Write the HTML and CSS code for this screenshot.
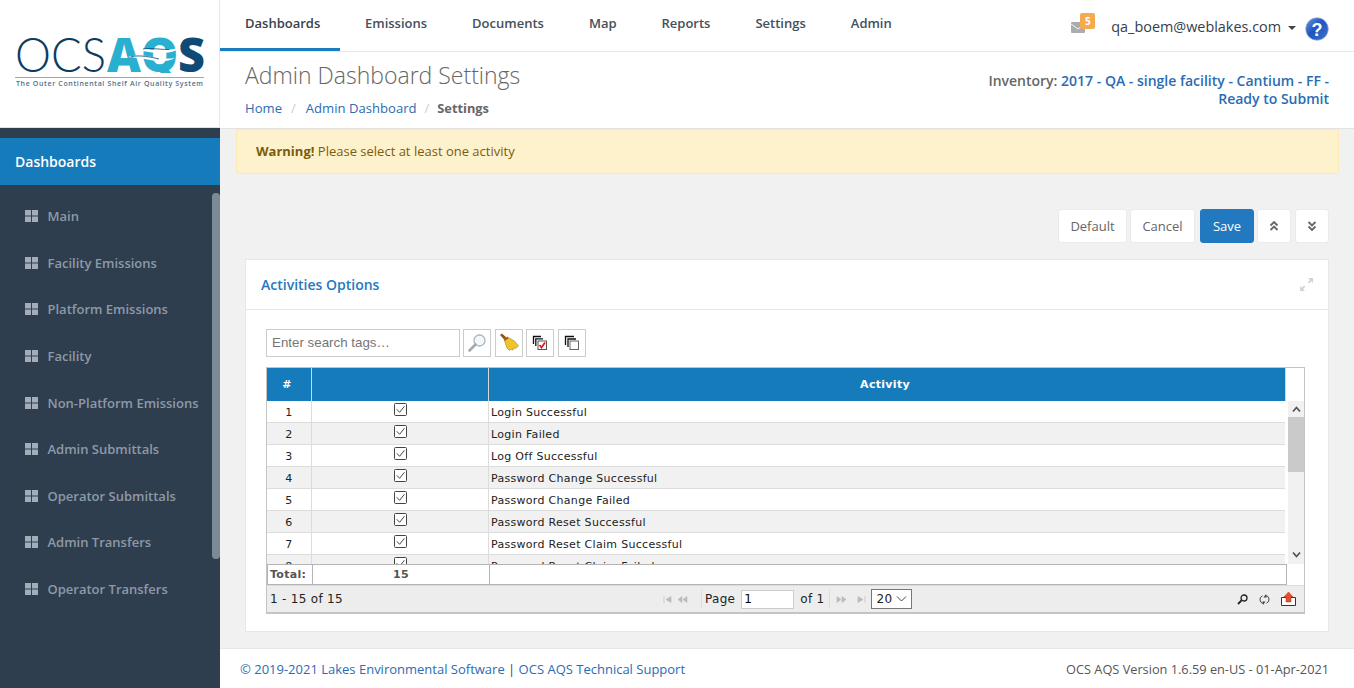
FILE: index.html

```html
<!DOCTYPE html>
<html lang="en">
<head>
  <meta charset="UTF-8">
  <title>Admin Dashboard Settings</title>
  <link rel="stylesheet" href="styles.css">
</head>
<body>
  <svg class="defs" width="0" height="0">
    <symbol id="i-grid" viewBox="0 0 13 12"><path d="M0 0h6v5.500H0zM7 0h6v5.500H7zM0 6.500h6V12H0zM7 6.500h6V12H7z" fill="currentColor"/></symbol>
    <symbol id="i-check" viewBox="0 0 13 13"><rect x=".5" y=".5" width="12" height="12" rx="1" fill="#fff" stroke="#444"/><path d="M2.800 6.300l2.800 3 4.800-6" fill="none" stroke="#444" stroke-width="1"/></symbol>
  </svg>

  <aside class="sidebar">
    <div class="logo">
      <svg width="192" height="64" viewBox="0 0 192 64">
        <defs><clipPath id="logoclip"><rect x="85" y="0" width="107" height="45"/></clipPath></defs>
        <text x="0" y="44" class="logo-ocs" textLength="91" lengthAdjust="spacingAndGlyphs">OCS</text>
        <g clip-path="url(#logoclip)">
          <text x="92" y="44" class="logo-aqs" textLength="98" lengthAdjust="spacingAndGlyphs">AQ<tspan class="logo-s">S</tspan></text>
        </g>
        <path d="M124 22c8-2.500 14 1 22 .5 6-.3 14-1.500 20-3-5 4-14 6-22 5.500-7-.4-13-1-20-3z" fill="#fff"/>
        <path d="M128 21c7-1.500 14 .5 26 .5" fill="none" stroke="#0f4a7c" stroke-width=".8"/>
        <path d="M113 29c9-3 18-2 27 .5 5 1.300 14 1.300 20 .5-6 3.500-15 4-22 2.500-7-1.500-18-3-25-3.500z" fill="#fff"/>
        <path d="M116 28.800c9-2.200 20 .3 28 2.200" fill="none" stroke="#0f4a7c" stroke-width=".8"/>
        <rect x="0" y="49" width="189" height=".8" fill="#7d95a8"/>
        <text x="1" y="58" class="logo-tag" textLength="187">The Outer Continental Shelf Air Quality System</text>
      </svg>
    </div>
    <div class="side-gap"></div>
    <div class="side-title">Dashboards</div>
    <nav class="side-menu">
      <a class="side-item"><svg width="13" height="12"><use href="#i-grid"/></svg>Main</a>
      <a class="side-item"><svg width="13" height="12"><use href="#i-grid"/></svg>Facility Emissions</a>
      <a class="side-item"><svg width="13" height="12"><use href="#i-grid"/></svg>Platform Emissions</a>
      <a class="side-item"><svg width="13" height="12"><use href="#i-grid"/></svg>Facility</a>
      <a class="side-item"><svg width="13" height="12"><use href="#i-grid"/></svg>Non-Platform Emissions</a>
      <a class="side-item"><svg width="13" height="12"><use href="#i-grid"/></svg>Admin Submittals</a>
      <a class="side-item"><svg width="13" height="12"><use href="#i-grid"/></svg>Operator Submittals</a>
      <a class="side-item"><svg width="13" height="12"><use href="#i-grid"/></svg>Admin Transfers</a>
      <a class="side-item"><svg width="13" height="12"><use href="#i-grid"/></svg>Operator Transfers</a>
      <div class="side-thumb"></div>
    </nav>
  </aside>

  <div class="main">
    <header class="topbar">
      <nav class="tabs">
        <a class="tab active">Dashboards</a>
        <a class="tab">Emissions</a>
        <a class="tab">Documents</a>
        <a class="tab">Map</a>
        <a class="tab">Reports</a>
        <a class="tab">Settings</a>
        <a class="tab">Admin</a>
      </nav>
      <div class="user-area">
        <span class="mail">
          <svg width="14" height="11" viewBox="0 0 14 11"><rect width="14" height="11" rx="1" fill="#a9adb1"/><path d="M0 2l7 5 7-5" fill="none" stroke="#f4f4f4" stroke-width="1"/></svg>
          <span class="mail-badge">5</span>
        </span>
        <span class="user-name">qa_boem@weblakes.com</span>
        <span class="caret"></span>
        <svg class="help" width="24" height="24" viewBox="0 0 24 24">
          <defs><linearGradient id="helpfill" x1="0" y1="0" x2="1" y2="1"><stop offset="0" stop-color="#6f95e0"/><stop offset=".45" stop-color="#1f55c0"/><stop offset="1" stop-color="#3f73cf"/></linearGradient></defs>
          <circle cx="12" cy="12" r="11.300" fill="url(#helpfill)" stroke="#9db4d8" stroke-width=".7"/>
          <text x="12" y="18.500" class="help-mark">?</text>
        </svg>
      </div>
    </header>

    <div class="page-head">
      <div>
        <h1>Admin Dashboard Settings</h1>
        <ul class="crumbs">
          <li><a>Home</a></li>
          <li class="sep">/</li>
          <li><a>Admin Dashboard</a></li>
          <li class="sep">/</li>
          <li class="current">Settings</li>
        </ul>
      </div>
      <div class="inventory">Inventory: <a>2017 - QA - single facility - Cantium - FF - Ready to Submit</a></div>
    </div>

    <div class="content">
      <div class="alert"><b>Warning!</b> Please select at least one activity</div>

      <div class="actions">
        <button class="btn btn-default">Default</button>
        <button class="btn btn-cancel">Cancel</button>
        <button class="btn primary">Save</button>
        <button class="btn icon-btn"><svg width="10" height="12" viewBox="0 0 10 12"><path d="M1.500 5.500L5 2l3.500 3.500M1.500 10L5 6.500 8.500 10" fill="none" stroke="#666" stroke-width="1.800"/></svg></button>
        <button class="btn icon-btn"><svg width="10" height="12" viewBox="0 0 10 12"><path d="M1.500 2L5 5.500 8.500 2M1.500 6.500L5 10l3.500-3.500" fill="none" stroke="#666" stroke-width="1.800"/></svg></button>
      </div>

      <section class="panel">
        <div class="panel-head">
          <span class="panel-title">Activities Options</span>
          <svg width="13" height="13" viewBox="0 0 13 13"><path d="M8 0h5v5l-1.700-1.700-2.300 2.300-1.300-1.300 2.300-2.300zM5 13H0V8l1.700 1.700L4 7.400l1.300 1.300-2.300 2.300z" fill="#d3d3d3"/></svg>
        </div>
        <div class="panel-body">
          <div class="search-row">
            <input class="tag-input" type="text" placeholder="Enter search tags…">
            <button class="tool">
              <svg width="20" height="20" viewBox="0 0 20 20"><circle cx="12.500" cy="7.500" r="5.500" fill="#f4f8fb" stroke="#a9b4bc" stroke-width="1.300"/><path d="M8.500 11.500L2.500 17.500" stroke="#a8a8a8" stroke-width="2.600" stroke-linecap="round"/></svg>
            </button>
            <button class="tool">
              <svg width="20" height="20" viewBox="0 0 20 20"><path d="M1 2l2-1.500 5 4.500-2.500 2z" fill="#8a5a1c"/><path d="M5 6.500l3.500-2.500 7 4 4 5-3 2.500-2-.5-.5 2-2.500-.5-1 1-2.500-2.500z" fill="#eec42a" stroke="#a98a12" stroke-width=".6"/><path d="M5 6.500l3.500-2.500 1 1.200L6 7.800z" fill="#c23b22"/></svg>
            </button>
            <button class="tool tool-tight">
              <svg width="16" height="16" viewBox="0 0 16 16"><path d="M1.500 9V1.500H9" fill="none" stroke="#111" stroke-width="1.300"/><path d="M3.800 11V3.800H11" fill="none" stroke="#111" stroke-width="1.300"/><rect x="6" y="6" width="8.500" height="8.500" fill="#fff" stroke="#555"/><path d="M7.500 10l2 2.500 3.500-5" fill="none" stroke="#e01820" stroke-width="1.700"/></svg>
            </button>
            <button class="tool">
              <svg width="16" height="16" viewBox="0 0 16 16"><path d="M1.500 10V1.500H10" fill="none" stroke="#111" stroke-width="1.300"/><path d="M4 12V4h8" fill="none" stroke="#111" stroke-width="1.300"/><rect x="6" y="6" width="8.500" height="8.500" fill="#fff" stroke="#666"/></svg>
            </button>
          </div>

          <div class="grid">
            <div class="grid-top">
              <div class="grid-head">
                <div class="cell">#</div>
                <div class="cell"></div>
                <div class="cell">Activity</div>
              </div>
              <div class="grid-corner"></div>
            </div>
            <div class="grid-mid">
              <div class="grid-rows">
                <div class="row"><div class="cell num">1</div><div class="cell chk"><svg width="13" height="13"><use href="#i-check"/></svg></div><div class="cell txt">Login Successful</div></div>
                <div class="row alt"><div class="cell num">2</div><div class="cell chk"><svg width="13" height="13"><use href="#i-check"/></svg></div><div class="cell txt">Login Failed</div></div>
                <div class="row"><div class="cell num">3</div><div class="cell chk"><svg width="13" height="13"><use href="#i-check"/></svg></div><div class="cell txt">Log Off Successful</div></div>
                <div class="row alt"><div class="cell num">4</div><div class="cell chk"><svg width="13" height="13"><use href="#i-check"/></svg></div><div class="cell txt">Password Change Successful</div></div>
                <div class="row"><div class="cell num">5</div><div class="cell chk"><svg width="13" height="13"><use href="#i-check"/></svg></div><div class="cell txt">Password Change Failed</div></div>
                <div class="row alt"><div class="cell num">6</div><div class="cell chk"><svg width="13" height="13"><use href="#i-check"/></svg></div><div class="cell txt">Password Reset Successful</div></div>
                <div class="row"><div class="cell num">7</div><div class="cell chk"><svg width="13" height="13"><use href="#i-check"/></svg></div><div class="cell txt">Password Reset Claim Successful</div></div>
                <div class="row alt"><div class="cell num">8</div><div class="cell chk"><svg width="13" height="13"><use href="#i-check"/></svg></div><div class="cell txt">Password Reset Claim Failed</div></div>
              </div>
              <div class="scrollbar">
                <svg width="9" height="7" viewBox="0 0 9 7"><path d="M1 5.500l3.500-4 3.500 4" fill="none" stroke="#555" stroke-width="1.800"/></svg>
                <div class="scroll-track"><div class="scroll-thumb"></div></div>
                <svg class="arrow-down" width="9" height="7" viewBox="0 0 9 7"><path d="M1 1.500l3.500 4 3.500-4" fill="none" stroke="#555" stroke-width="1.800"/></svg>
              </div>
            </div>
            <div class="grid-total">
              <div class="total-row">
                <div class="cell t-label">Total:</div>
                <div class="cell t-value">15</div>
                <div class="cell"></div>
              </div>
            </div>
            <div class="pager">
              <div class="pager-info">1 - 15 of 15</div>
              <div class="pager-mid">
                <svg class="nav-first" width="30" height="7" viewBox="0 0 30 7"><path d="M1 0v7M8 0.500L3 3.500l5 3zM19 .5l-4 3 4 3zM24 .5l-4 3 4 3z" fill="#bbb" stroke="#bbb" stroke-width=".6"/></svg>
                <span class="pager-sep"></span>
                <span>Page</span>
                <input class="page-input" type="text" value="1">
                <span>of 1</span>
                <span class="pager-sep"></span>
                <svg class="nav-last" width="30" height="7" viewBox="0 0 30 7"><path d="M1 .5l4 3-4 3zM6 .5l4 3-4 3zM22 .5l5 3-5 3zM29 0v7" fill="#bbb" stroke="#bbb" stroke-width=".6"/></svg>
                <span class="page-size">20<svg width="11" height="6" viewBox="0 0 11 6"><path d="M1 .5l4.500 4.500L10 .5" fill="none" stroke="#444" stroke-width="1"/></svg></span>
              </div>
              <div class="pager-tools">
                <svg width="11" height="11" viewBox="0 0 11 11"><circle cx="7" cy="4" r="3" fill="none" stroke="#222" stroke-width="1.300"/><path d="M4.800 6.200L1 10" stroke="#222" stroke-width="1.800"/></svg>
                <svg width="11" height="11" viewBox="0 0 11 11"><path d="M3.500 1.800A4 4 0 0 0 4.500 9.500M7.500 9.200A4 4 0 0 0 6.500 1.500" fill="none" stroke="#444" stroke-width="1"/><path d="M7 0L4.500 3.500h3zM4 11l2.500-3.500h-3z" fill="#444"/></svg>
                <svg width="15" height="14" viewBox="0 0 15 14"><path d="M.5 5.500h14v8H.5z" fill="#fff" stroke="#333"/><path d="M7.500 0L12 5H10v5H5V5H3z" fill="#e2502f" stroke="#b13318" stroke-width=".5"/></svg>
              </div>
            </div>
          </div>
        </div>
      </section>
    </div>

    <footer class="footer">
      <div><a>© 2019-2021 Lakes Environmental Software</a> | <a>OCS AQS Technical Support</a></div>
      <div class="version">OCS AQS Version 1.6.59 en-US - 01-Apr-2021</div>
    </footer>
  </div>
</body>
</html>
```

FILE: styles.css

```css
* {
  box-sizing: border-box;
}
html, body {
  height: 100%;
}
body {
  margin: 0;
  display: flex;
  height: 688px;
  overflow: hidden;
  font-family: "Open Sans", sans-serif;
  font-size: 13px;
  color: #333;
  background-color: #f1f1f1;
}
a {
  color: #2a6cb4;
  text-decoration: none;
}
.defs {
  position: absolute;
}

/* left column */
.sidebar {
  width: 220px;
  flex: none;
  display: flex;
  flex-direction: column;
  background-color: #2f3e4e;
}
.logo {
  height: 128px;
  padding: 28px 0 0 15px;
  background-color: #fff;
  border-right: 1px solid #e7e7e7;
  border-bottom: 1px solid #e0e0e0;
}
.logo svg {
  overflow: visible;
}
.logo-ocs {
  font-family: "Lato", sans-serif;
  font-weight: 300;
  font-size: 48px;
  fill: #0b3d63;
}
.logo-aqs {
  font-family: "Open Sans", sans-serif;
  font-weight: 800;
  font-size: 48px;
  fill: #29afd0;
}
.logo-s {
  fill: #0e4a74;
}
.logo-tag {
  font-family: "Open Sans", sans-serif;
  font-weight: 600;
  font-size: 7px;
  fill: #50708a;
}
.side-gap {
  height: 10px;
}
.side-title {
  height: 47px;
  padding-left: 15px;
  line-height: 47px;
  font-size: 14px;
  font-weight: 600;
  color: #fff;
  background-color: #167bba;
}
.side-menu {
  position: relative;
  flex: 1;
  padding-top: 8px;
}
.side-item {
  display: flex;
  align-items: center;
  gap: 9.500px;
  height: 46.570px;
  padding-left: 25px;
  font-size: 13px;
  font-weight: 600;
  color: #8d99a8;
}
.side-item svg {
  color: #a3adba;
}
.side-thumb {
  position: absolute;
  top: 8px;
  right: 0;
  width: 8px;
  height: 366px;
  border-radius: 4px;
  background-color: #7a8b95;
}

/* right column */
.main {
  flex: 1;
  min-width: 0;
  display: flex;
  flex-direction: column;
}
.topbar {
  height: 52px;
  flex: none;
  display: flex;
  justify-content: space-between;
  background-color: #fff;
  border-bottom: 1px solid #e7e7e7;
}
.tabs {
  display: flex;
}
.tab {
  height: 51px;
  padding: 14px 0 0;
  margin-right: 45px;
  font-size: 13px;
  font-weight: 600;
  color: #44505c;
}
.tab.active {
  width: 120px;
  margin-right: 25px;
  padding-left: 25px;
  border-bottom: 3px solid #1a7dc0;
  color: #37424e;
}
.user-area {
  display: flex;
  align-items: center;
  padding: 2px 25px 0 0;
}
.mail {
  position: relative;
  display: flex;
  margin-right: 26px;
  margin-top: 2px;
}
.mail-badge {
  position: absolute;
  top: -9px;
  left: 9px;
  width: 15px;
  height: 16px;
  border-radius: 2px;
  background-color: #f7a94f;
  color: #fff;
  font-size: 10px;
  font-weight: 700;
  line-height: 16px;
  text-align: center;
}
.user-name {
  font-size: 14.400px;
  font-weight: 400;
  color: #34404c;
}
.caret {
  width: 0;
  height: 0;
  margin: 3px 9px 0 7px;
  border-top: 4px solid #444;
  border-left: 4px solid transparent;
  border-right: 4px solid transparent;
}
.help {
  margin-top: 4px;
}
.help-mark {
  font-family: "Liberation Sans", sans-serif;
  font-size: 18px;
  font-weight: 700;
  text-anchor: middle;
  fill: #fff;
}

.page-head {
  height: 77px;
  flex: none;
  display: flex;
  justify-content: space-between;
  padding: 6px 25px 0;
  background-color: #fff;
  border-bottom: 1px solid #e3e3e3;
}
h1 {
  margin: 0;
  font-size: 23px;
  font-weight: 300;
  line-height: 34px;
  color: #666;
}
.crumbs {
  display: flex;
  gap: 9px;
  margin: 7px 0 0;
  padding: 0;
  list-style: none;
  line-height: 18px;
}
.crumbs a {
  font-size: 13.100px;
}
.crumbs li:nth-child(3) {
  margin-left: 1px;
}
.crumbs li:nth-child(4), .crumbs li:nth-child(5) {
  margin-left: -1px;
}
.crumbs .sep {
  color: #ccc;
}
.crumbs .current {
  font-size: 12.800px;
  font-weight: 700;
  color: #666;
}
.inventory {
  width: 350px;
  margin-top: 14px;
  font-size: 14px;
  font-weight: 600;
  line-height: 18px;
  text-align: right;
  color: #666;
}

.content {
  flex: 1;
  min-height: 0;
  padding: 0 25px;
}
.alert {
  height: 45px;
  margin: 0 -10px 0 -9px;
  padding: 0 19px;
  line-height: 42px;
  font-size: 13px;
  color: #7b5c0d;
  background-color: #fef2cd;
  border: 1px solid #fbeab5;
  border-radius: 0 0 4px 4px;
}
.actions {
  display: flex;
  justify-content: flex-end;
  gap: 3px;
  margin-top: 35px;
}
.btn {
  height: 34px;
  padding: 0;
  font-family: inherit;
  font-size: 13px;
  color: #666;
  background-color: #fff;
  border: 1px solid #ebebeb;
  border-radius: 3px;
}
.btn-default {
  width: 69px;
}
.btn-cancel {
  width: 65px;
}
.btn.primary {
  width: 54px;
  margin-left: 2px;
  color: #fff;
  background-color: #2379bf;
  border-color: #2379bf;
}
.icon-btn {
  display: flex;
  align-items: center;
  justify-content: center;
  width: 34px;
}
.icon-btn:last-child {
  margin-left: 1px;
}
.panel {
  height: 373px;
  margin-top: 16px;
  background-color: #fff;
  border: 1px solid #e7e7e7;
}
.panel-head {
  display: flex;
  align-items: center;
  justify-content: space-between;
  height: 50px;
  padding: 0 15px;
  border-bottom: 1px solid #e7e7e7;
}
.panel-title {
  font-size: 14px;
  font-weight: 600;
  color: #2379bf;
}
.panel-body {
  padding: 19px 20px 0;
}
.search-row {
  display: flex;
  gap: 4px;
  height: 28px;
}
.tag-input {
  width: 194px;
  height: 28px;
  margin-right: -1px;
  padding: 0 5px 2px;
  font-family: "Liberation Sans", sans-serif;
  font-size: 13.333px;
  border: 1px solid #ccc;
}
.tag-input::placeholder {
  color: #757575;
}
.tool {
  display: flex;
  align-items: center;
  justify-content: center;
  width: 28px;
  height: 28px;
  padding: 0;
  background-color: #fff;
  border: 1px solid #ccc;
}
.tool-tight {
  margin-left: -1px;
}

/* jqgrid-looking table */
.grid {
  width: 1039px;
  margin-top: 10px;
  border: 1px solid #c4c4c4;
  border-bottom-width: 2px;
  font-family: "DejaVu Sans", sans-serif;
  font-size: 11px;
  letter-spacing: .3px;
  color: #222;
}
.grid-top {
  display: flex;
}
.grid-head {
  flex: 1;
  display: grid;
  grid-template-columns: 45px 177px 1fr;
  height: 33px;
  background-color: #167bba;
  color: #fff;
  font-weight: 700;
  text-align: center;
  line-height: 34px;
}
.grid-head .cell {
  padding-right: 4px;
  border-right: 1px solid #d8d8d8;
}
.grid-head .cell:last-child {
  border-right: 0;
}
.grid-corner {
  width: 19px;
  border-left: 1px solid #d8d8d8;
}
.grid-mid {
  display: flex;
  height: 163px;
  overflow: hidden;
}
.grid-rows {
  flex: 1;
}
.row {
  display: grid;
  grid-template-columns: 45px 177px 1fr;
  height: 22px;
  border-bottom: 1px solid #dcdcdc;
  line-height: 21px;
  overflow: hidden;
}
.row.alt {
  background-color: #f1f1f1;
}
.row .cell {
  border-right: 1px solid #dcdcdc;
}
.row .cell:last-child {
  border-right: 0;
}
.num {
  text-align: center;
  padding-top: 1px;
}
.chk {
  display: flex;
  justify-content: center;
  padding-top: 2px;
}
.txt {
  padding: 1px 0 0 2px;
}
.scrollbar {
  width: 19px;
  display: flex;
  flex-direction: column;
  align-items: center;
  padding-top: 1px;
  background-color: #f1f1f1;
  border-left: 3px solid #fff;
}
.scrollbar svg {
  flex: none;
  margin: 4px 0;
}
.scrollbar .arrow-down {
  margin-bottom: 6px;
}
.scroll-track {
  flex: 1;
  width: 100%;
}
.scroll-thumb {
  width: 100%;
  height: 55px;
  background-color: #cacaca;
}
.grid-total {
  background-color: #fff;
  padding-right: 17px;
}
.total-row {
  display: grid;
  grid-template-columns: 45px 177px 1fr;
  height: 21px;
  border: 1px solid #b4b4b4;
  line-height: 19px;
  font-weight: 700;
  color: #555;
}
.total-row .cell {
  border-right: 1px solid #b4b4b4;
}
.total-row .cell:last-child {
  border-right: 0;
}
.t-label {
  padding-left: 2px;
}
.t-value {
  text-align: center;
}
.pager {
  position: relative;
  display: flex;
  align-items: center;
  justify-content: space-between;
  height: 27px;
  padding: 0 8px 0 3px;
  background-color: #ededed;
  border-top: 1px solid #dcdcdc;
  font-size: 12px;
}
.pager-mid {
  position: absolute;
  left: 396px;
  top: 3px;
  display: flex;
  align-items: center;
  gap: 3px;
}
.nav-first {
  margin-right: 3px;
}
.nav-last {
  margin: 0 2px 0 3px;
}
.pager-sep {
  width: 1px;
  height: 18px;
  margin-left: 2px;
  background-color: #ddd;
}
.page-input {
  width: 53px;
  height: 19px;
  margin: 0 3px;
  padding: 0 2px;
  font-family: inherit;
  font-size: 12px;
  border: 1px solid #ccc;
}
.page-size {
  display: flex;
  align-items: center;
  justify-content: space-between;
  width: 41px;
  height: 20px;
  padding: 0 4px;
  background-color: #fff;
  border: 1px solid #777;
}
.pager-tools {
  display: flex;
  align-items: center;
  gap: 11px;
}

.footer {
  height: 40px;
  flex: none;
  display: flex;
  align-items: center;
  justify-content: space-between;
  padding: 0 25px 0 20px;
  background-color: #fff;
  border-top: 1px solid #e7e7e7;
  color: #444;
}
.version {
  font-size: 12.750px;
  color: #555;
}
```
